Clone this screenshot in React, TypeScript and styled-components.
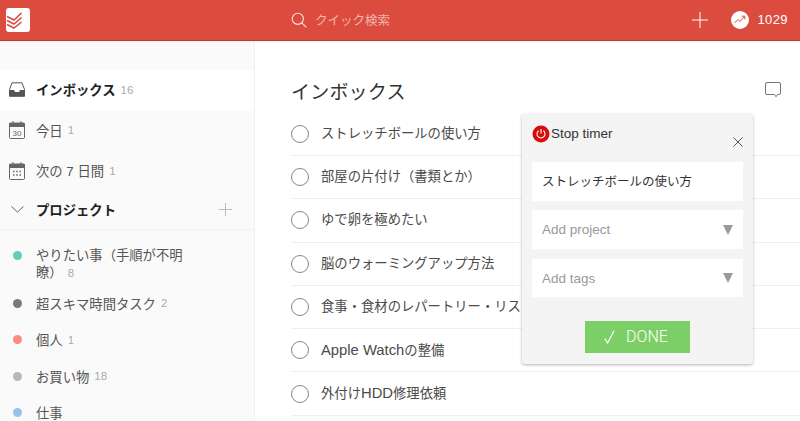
import type { ReactNode } from 'react';
import styled, { createGlobalStyle } from 'styled-components';

const GlobalStyle = createGlobalStyle`
  html, body {
    margin: 0;
    padding: 0;
    height: 100%;
    overflow: hidden;
    background: #fff;
    font-family: "Liberation Sans", "Noto Sans CJK JP", sans-serif;
  }
`;

/* -------- Styled Components -------- */
const Page = styled.div`
  position: relative;
  width: 800px;
  height: 421px;
  overflow: hidden;
`;

const TopBar = styled.header`
  position: relative;
  display: flex;
  align-items: center;
  box-sizing: border-box;
  height: 41px;
  padding: 0 12px 1px 6px;
  background: #db4c3f;
  border-bottom: 1px solid #c53727;
  box-shadow: 0 1px 2px rgba(0, 0, 0, 0.06);
`;

const Logo = styled.div`
  display: flex;
  width: 24px;
  height: 24px;
  border-radius: 3px;
  background: #fff;
`;

const Search = styled.div`
  display: flex;
  align-items: center;
  gap: 8px;
  margin-left: 261px;
  flex: 1;
  font-size: 12.5px;
  color: #f3b5ae;
`;

const Karma = styled.div`
  display: flex;
  align-items: center;
  margin-left: 23px;
  gap: 8px;
  font-size: 13px;
  letter-spacing: 0.4px;
  color: #fff;
`;

const Body = styled.div`
  display: flex;
  height: 380px;
`;

const Sidebar = styled.nav`
  box-sizing: border-box;
  width: 255px;
  padding-top: 29px;
  background: #fafafa;
  border-right: 1px solid #f1f1f1;
`;

const NavRow = styled.div<{ active?: boolean }>`
  display: flex;
  align-items: center;
  box-sizing: border-box;
  height: 40.5px;
  padding: 0 0 1px 9px;
  background: ${props => (props.active ? '#fff' : 'transparent')};
`;

const NavIcon = styled.span`
  display: flex;
  width: 16px;
  margin-right: 11px;
`;

const NavLabel = styled.span<{ bold?: boolean }>`
  font-size: 13.33px;
  font-weight: ${props => (props.bold ? 700 : 400)};
  color: ${props => (props.bold ? '#222' : '#555')};
`;

const Count = styled.span`
  margin-left: 5px;
  font-size: 11.5px;
  color: #aaa;
`;

const ProjectHead = styled.div`
  display: flex;
  align-items: center;
  box-sizing: border-box;
  height: 38px;
  padding: 0 22px 1px 11px;
  border-bottom: 1px solid #f1f1f1;
  margin-bottom: 6px;
`;

const HeadLabel = styled.span`
  flex: 1;
  margin-left: 12px;
  font-size: 13.33px;
  font-weight: 700;
  color: #222;
`;

const ProjectRow = styled.div`
  display: flex;
  align-items: center;
  height: 36.5px;
  padding-left: 13px;
`;

const TallRow = styled.div`
  display: flex;
  align-items: flex-start;
  box-sizing: border-box;
  height: 49.5px;
  padding: 11px 0 0 13px;
`;

const Dot = styled.span<{ color: string }>`
  flex: none;
  width: 9px;
  height: 9px;
  margin-right: 14px;
  border-radius: 50%;
  background: ${props => props.color};
`;

const TallDot = styled(Dot)`
  margin-top: 4px;
`;

const ProjectName = styled.span`
  width: 150px;
  font-size: 13.33px;
  line-height: 17px;
  color: #555;
`;

const Main = styled.main`
  flex: 1;
  padding: 31px 0 0 36px;
`;

const TitleRow = styled.div`
  display: flex;
  align-items: center;
  justify-content: space-between;
  height: 36px;
  padding-right: 19px;
  margin-bottom: 4.7px;
`;

const Title = styled.h1`
  margin: 0;
  font-size: 19px;
  font-weight: 400;
  letter-spacing: 0.2px;
  color: #333;
`;

const TaskRow = styled.div`
  display: flex;
  align-items: center;
  gap: 12px;
  box-sizing: border-box;
  height: 43.3px;
  border-bottom: 1px solid #efefef;
  font-size: 13.33px;
  color: #4a4a4a;
`;

const TaskText = styled.span`
  line-height: 18px;
`;

const Latin = styled.span`
  font-size: 14.8px;
`;

const Check = styled.span`
  flex: none;
  box-sizing: border-box;
  width: 18px;
  height: 18px;
  border-radius: 50%;
  border: 1px solid #888;
`;

const TimerCard = styled.section`
  position: absolute;
  left: 522px;
  top: 114px;
  box-sizing: border-box;
  width: 231px;
  height: 250px;
  padding: 0 10px;
  border-radius: 3px;
  background: #f4f4f4;
  box-shadow: 0 1px 3px rgba(0, 0, 0, 0.3);
`;

const CardHead = styled.div`
  display: flex;
  align-items: center;
  height: 48px;
  padding-bottom: 9px;
  box-sizing: border-box;
  font-size: 13.5px;
  color: #333;
`;

const Power = styled.span`
  display: flex;
  margin-right: 1px;
`;

const Close = styled.span`
  position: absolute;
  top: 23px;
  right: 10px;
  display: flex;
`;

const Field = styled.div<{ muted?: boolean }>`
  display: flex;
  align-items: center;
  justify-content: space-between;
  box-sizing: border-box;
  height: 38.7px;
  margin-bottom: 9.7px;
  padding: ${props => (props.muted ? '0 10px' : '0 10px 2px')};
  background: #fff;
  font-size: ${props => (props.muted ? '13.5px' : '12.5px')};
  color: ${props => (props.muted ? '#999' : '#333')};
`;

const Arrow = styled.span`
  width: 0;
  height: 0;
  border-left: 5px solid transparent;
  border-right: 5px solid transparent;
  border-top: 10px solid #999;
`;

const DoneRow = styled.div`
  display: flex;
  justify-content: center;
  padding-top: 13.6px;
`;

const DoneButton = styled.button`
  display: flex;
  align-items: center;
  justify-content: center;
  gap: 11px;
  width: 105px;
  height: 32.5px;
  padding: 0 3px 0 0;
  border: 0;
  background: #7ccf67;
  font-family: Roboto, "Liberation Sans", sans-serif;
  font-weight: 300;
  font-size: 16px;
  color: #fff;
`;

const tasks: { id: number; text: ReactNode }[] = [
  { id: 1, text: 'ストレッチボールの使い方' },
  { id: 2, text: '部屋の片付け（書類とか）' },
  { id: 3, text: 'ゆで卵を極めたい' },
  { id: 4, text: '脳のウォーミングアップ方法' },
  { id: 5, text: '食事・食材のレパートリー・リスト' },
  { id: 6, text: <><Latin>Apple Watch</Latin>の整備</> },
  { id: 7, text: <>外付け<Latin>HDD</Latin>修理依頼</> },
];

const projects = [
  { name: '超スキマ時間タスク', count: 2, color: '#7a7a7a' },
  { name: '個人', count: 1, color: '#ff8a80' },
  { name: 'お買い物', count: 18, color: '#b8b8b8' },
  { name: '仕事', color: '#96c3eb' },
];

function App() {
  return (
    <Page>
      <GlobalStyle />
      <TopBar>
        <Logo>
          <svg width="24" height="24" viewBox="0 0 24 24" fill="none" stroke="#db4c3f" strokeWidth="1.6">
            <path d="M1 8.5 L8 12 L15.5 5" />
            <path d="M1 12.5 L8 16 L15.5 9.5" />
            <path d="M1 16.5 L8 20 L15.5 14" />
          </svg>
        </Logo>
        <Search>
          <svg width="16" height="16" viewBox="0 0 16 16" fill="none" stroke="#fbe3e0" strokeWidth="1.1">
            <circle cx="6.8" cy="6.8" r="5.6" />
            <path d="M10.8 10.8 L15.4 15.4" />
          </svg>
          クイック検索
        </Search>
        <svg width="16" height="16" viewBox="0 0 16 16" stroke="#fff" strokeWidth="1">
          <path d="M8 0 V16 M0 8 H16" />
        </svg>
        <Karma>
          <svg width="18" height="18" viewBox="0 0 18 18" fill="none">
            <circle cx="9" cy="9" r="9" fill="#fff" />
            <path d="M3.5 12 L7 8.5 L9 10.5 L13.5 5.5 M10.5 5.2 H13.8 V8.5" stroke="#db4c3f" strokeWidth="1" />
          </svg>
          1029
        </Karma>
      </TopBar>

      <Body>
        <Sidebar>
          <NavRow active>
            <NavIcon>
              <svg width="16" height="15" viewBox="0 0 16 15" fill="none">
                <path d="M0.5 7.5 L3 0.8 H13 L15.5 7.5 V14.2 H0.5 Z" stroke="#555" />
                <path d="M0.5 8 H5 L6 10 H10 L11 8 H15.5 V14.5 H0.5 Z" fill="#555" />
              </svg>
            </NavIcon>
            <NavLabel bold>インボックス</NavLabel>
            <Count>16</Count>
          </NavRow>
          <NavRow>
            <NavIcon>
              <svg width="16" height="18" viewBox="0 0 16 18" fill="none">
                <rect x="0.5" y="2" width="15" height="15.5" rx="1" stroke="#666" />
                <path d="M0.5 2.5 H15.5 V5.5 H0.5 Z" fill="#666" stroke="#666" />
                <path d="M4 0 V3 M12 0 V3" stroke="#666" />
                <text x="8" y="14.6" textAnchor="middle" fontSize="8" fill="#666" fontFamily="Liberation Sans">30</text>
              </svg>
            </NavIcon>
            <NavLabel>今日</NavLabel>
            <Count>1</Count>
          </NavRow>
          <NavRow>
            <NavIcon>
              <svg width="16" height="18" viewBox="0 0 16 18" fill="none">
                <rect x="0.5" y="2" width="15" height="15.5" rx="1" stroke="#666" />
                <path d="M0.5 2.5 H15.5 V5.5 H0.5 Z" fill="#666" stroke="#666" />
                <path d="M4 0 V3 M12 0 V3" stroke="#666" />
                <path d="M4 9.5 H5.5 M7.2 9.5 H8.7 M10.5 9.5 H12 M4 13 H5.5 M7.2 13 H8.7 M10.5 13 H12" stroke="#666" strokeWidth="1.4" />
              </svg>
            </NavIcon>
            <NavLabel>次の 7 日間</NavLabel>
            <Count>1</Count>
          </NavRow>
          <ProjectHead>
            <svg width="13" height="7" viewBox="0 0 13 7" fill="none" stroke="#666">
              <path d="M0.5 0.5 L6.5 6 L12.5 0.5" />
            </svg>
            <HeadLabel>プロジェクト</HeadLabel>
            <svg width="13" height="13" viewBox="0 0 13 13" stroke="#bbb">
              <path d="M6.5 0 V13 M0 6.5 H13" />
            </svg>
          </ProjectHead>
          <TallRow>
            <TallDot color="#63cdb9" />
            <ProjectName>
              やりたい事（手順が不明瞭）<Count>8</Count>
            </ProjectName>
          </TallRow>
          {projects.map(project => (
            <ProjectRow key={project.name}>
              <Dot color={project.color} />
              <NavLabel>{project.name}</NavLabel>
              {project.count && <Count>{project.count}</Count>}
            </ProjectRow>
          ))}
        </Sidebar>

        <Main>
          <TitleRow>
            <Title>インボックス</Title>
            <svg width="16" height="16" viewBox="0 0 16 16" fill="none" stroke="#777">
              <path d="M2 0.5 H14 Q15.5 0.5 15.5 2 V11 Q15.5 12.5 14 12.5 H12.5 L11 14.8 L9.5 12.5 H2 Q0.5 12.5 0.5 11 V2 Q0.5 0.5 2 0.5 Z" />
            </svg>
          </TitleRow>
          {tasks.map(task => (
            <TaskRow key={task.id}>
              <Check />
              <TaskText>{task.text}</TaskText>
            </TaskRow>
          ))}
        </Main>
      </Body>

      <TimerCard>
        <CardHead>
          <Power>
            <svg width="18" height="18" viewBox="0 0 18 18" fill="none">
              <circle cx="9" cy="9" r="8.5" fill="#d90c0c" />
              <path d="M6.6 5.8 A4 4 0 1 0 11.4 5.8 M9 4 V8.5" stroke="#fff" strokeWidth="1.1" />
            </svg>
          </Power>
          Stop timer
        </CardHead>
        <Close>
          <svg width="10" height="10" viewBox="0 0 10 10" stroke="#555">
            <path d="M0.5 0.5 L9.5 9.5 M9.5 0.5 L0.5 9.5" />
          </svg>
        </Close>
        <Field>ストレッチボールの使い方</Field>
        <Field muted>
          Add project
          <Arrow />
        </Field>
        <Field muted>
          Add tags
          <Arrow />
        </Field>
        <DoneRow>
          <DoneButton>
            <svg width="11" height="14" viewBox="0 0 11 14" fill="none" stroke="#fff" strokeWidth="1.2">
              <path d="M0.8 8.5 L3.6 13 L10 0.8" />
            </svg>
            DONE
          </DoneButton>
        </DoneRow>
      </TimerCard>
    </Page>
  );
}

export default App;
